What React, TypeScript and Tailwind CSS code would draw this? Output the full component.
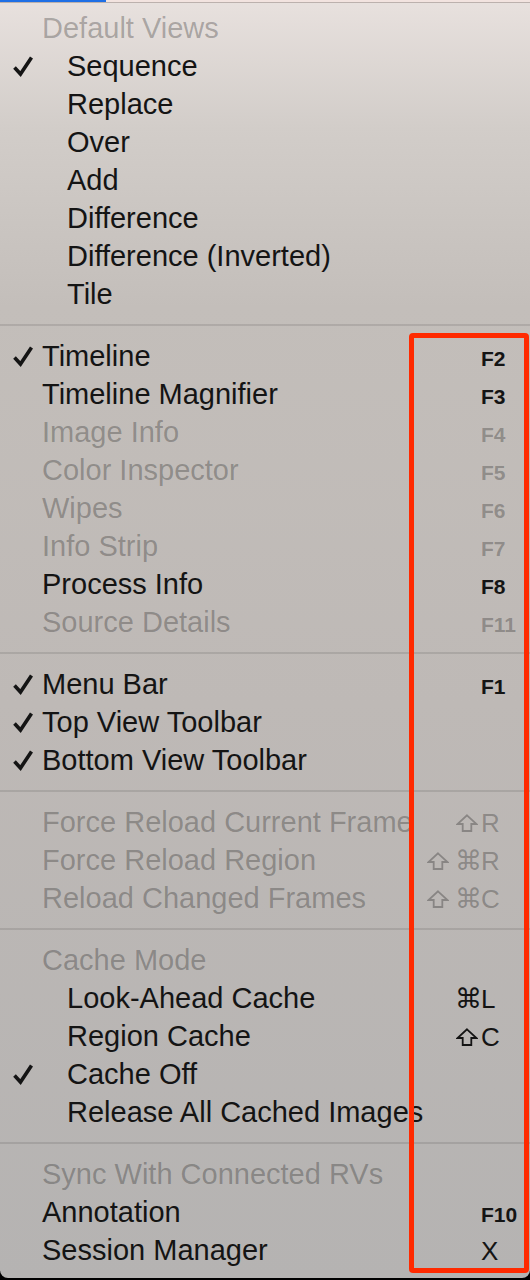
type Item = {
  label: string;
  indent?: boolean;
  checked?: boolean;
  disabled?: boolean;
  mods?: string[];
  keyName?: string;
  fkey?: boolean;
};

const sections: Item[][] = [
  [
    { label: 'Default Views', disabled: true },
    { label: 'Sequence', indent: true, checked: true },
    { label: 'Replace', indent: true },
    { label: 'Over', indent: true },
    { label: 'Add', indent: true },
    { label: 'Difference', indent: true },
    { label: 'Difference (Inverted)', indent: true },
    { label: 'Tile', indent: true },
  ],
  [
    { label: 'Timeline', checked: true, keyName: 'F2', fkey: true },
    { label: 'Timeline Magnifier', keyName: 'F3', fkey: true },
    { label: 'Image Info', disabled: true, keyName: 'F4', fkey: true },
    { label: 'Color Inspector', disabled: true, keyName: 'F5', fkey: true },
    { label: 'Wipes', disabled: true, keyName: 'F6', fkey: true },
    { label: 'Info Strip', disabled: true, keyName: 'F7', fkey: true },
    { label: 'Process Info', keyName: 'F8', fkey: true },
    { label: 'Source Details', disabled: true, keyName: 'F11', fkey: true },
  ],
  [
    { label: 'Menu Bar', checked: true, keyName: 'F1', fkey: true },
    { label: 'Top View Toolbar', checked: true },
    { label: 'Bottom View Toolbar', checked: true },
  ],
  [
    { label: 'Force Reload Current Frame', disabled: true, mods: ['shift'], keyName: 'R' },
    { label: 'Force Reload Region', disabled: true, mods: ['shift', 'cmd'], keyName: 'R' },
    { label: 'Reload Changed Frames', disabled: true, mods: ['shift', 'cmd'], keyName: 'C' },
  ],
  [
    { label: 'Cache Mode', disabled: true },
    { label: 'Look-Ahead Cache', indent: true, mods: ['cmd'], keyName: 'L' },
    { label: 'Region Cache', indent: true, mods: ['shift'], keyName: 'C' },
    { label: 'Cache Off', indent: true, checked: true },
    { label: 'Release All Cached Images', indent: true },
  ],
  [
    { label: 'Sync With Connected RVs', disabled: true },
    { label: 'Annotation', keyName: 'F10', fkey: true },
    { label: 'Session Manager', keyName: 'X' },
  ],
];

function Check() {
  return (
    <svg width="22" height="22" viewBox="0 0 22 22" className="block">
      <path
        d="M2.5 12.5 L8.5 19 L19.5 2.5"
        fill="none"
        stroke="currentColor"
        strokeWidth="3.6"
        strokeLinejoin="miter"
      />
    </svg>
  );
}

function Shift() {
  return (
    <svg width="22" height="18" viewBox="0 0 22 18" className="inline-block">
      <path
        d="M11 1.3 L20.5 10 L15.3 10 L15.3 17 L6.7 17 L6.7 10 L1.5 10 Z"
        fill="none"
        stroke="currentColor"
        strokeWidth="1.8"
        strokeLinejoin="miter"
      />
    </svg>
  );
}

function Row({ item }: { item: Item }) {
  const tone = item.disabled ? 'text-black/[0.27]' : 'text-[#141414]';
  return (
    <div className={`flex h-[38px] items-baseline leading-[38px] ${tone}`}>
      <span className="flex w-[42px] shrink-0 self-center pl-[12px]">
        {item.checked && <Check />}
      </span>
      {item.indent && <span className="w-[25px] shrink-0" />}
      <span className="whitespace-nowrap text-[29px]">{item.label}</span>
      {item.keyName && (
        <span className="ml-auto flex items-baseline">
          <span className="flex items-baseline justify-end gap-[6px] pr-[3px] font-['DejaVu_Sans',sans-serif] text-[27px]">
            {(item.mods ?? []).map((m, i) =>
              m === 'shift' ? (
                <Shift key={i} />
              ) : (
                <span key={i} className="inline-block w-[23px] text-center">
                  ⌘
                </span>
              )
            )}
          </span>
          <span
            className={`w-[49px] whitespace-nowrap ${
              item.fkey ? 'text-[21px] font-bold' : 'text-[26px]'
            }`}
          >
            {item.keyName}
          </span>
        </span>
      )}
    </div>
  );
}

export default function App() {
  return (
    <div className="relative h-[1280px] w-[530px] overflow-hidden bg-black font-['Liberation_Sans',Arial,sans-serif]">
      <div className="flex h-[1278px] flex-col rounded-b-[8px] bg-[linear-gradient(180deg,#e8e1de_0%,#d2cdc9_10%,#c3beba_24%,#beb9b6_55%,#b5b3b2_100%)]">
        <div className="flex h-[2px]">
          <div className="w-[106px] bg-[#1f6fe5]" />
          <div className="flex-1 bg-[#f2e3df]" />
        </div>
        <div className="h-px bg-[#bcb1ad]" />
        <div className="pt-[6px]">
          {sections.map((sec, si) => (
            <div key={si}>
              {si > 0 && <div className="my-[11px] h-[2px] bg-black/[0.1]" />}
              {sec.map((it, ii) => (
                <Row key={ii} item={it} />
              ))}
            </div>
          ))}
        </div>
      </div>
      <div className="absolute left-[409px] top-[333px] h-[940px] w-[120px] rounded-[4px] border-[5px] border-[#ff2a00]" />
    </div>
  );
}
